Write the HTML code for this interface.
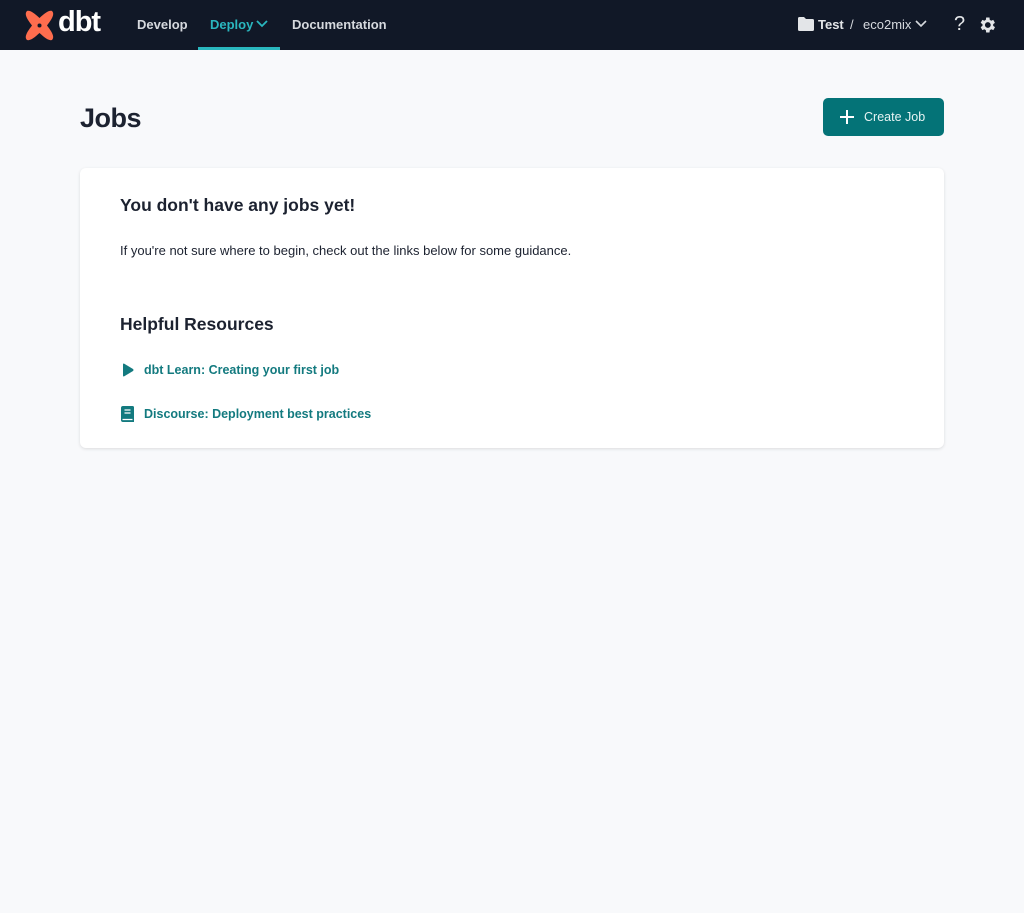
<!DOCTYPE html>
<html><head><meta charset="utf-8"><style>
*{margin:0;padding:0;box-sizing:border-box}
body{width:1024px;height:913px;background:#f8f9fb;font-family:"Liberation Sans",sans-serif;position:relative;overflow:hidden}
.nav{position:absolute;top:0;left:0;width:1024px;height:50px;background:#111827;color:#d6d9de}
.nav .t{position:absolute;top:17px;font-size:13px;font-weight:bold}
.card{position:absolute;left:80px;top:168px;width:864px;height:280px;background:#fff;border-radius:6px;box-shadow:0 1px 3px rgba(0,0,0,.12)}
.link{position:absolute;left:64px;font-size:12.5px;font-weight:bold;color:#137a7f}
</style></head><body>
<div class="nav">
<svg style="position:absolute;left:24px;top:10px" width="31" height="31" viewBox="0 0 31 31"><path d="M3 1 C6 0 10 3 15.5 8 C21 3 25 0 28 1 C31 4 28 9 23 15.5 C28 22 31 27 28 30 C25 31 21 28 15.5 23 C10 28 6 31 3 30 C0 27 3 22 8 15.5 C3 9 0 4 3 1Z" fill="#fe6d4e"/><circle cx="15.5" cy="15.5" r="2" fill="#111827"/></svg>
<div style="position:absolute;left:58px;top:6px;font-size:29px;font-weight:bold;color:#fff;letter-spacing:-1px">dbt</div>
<div class="t" style="left:137px">Develop</div>
<div class="t" style="left:210px;color:#2ab7bf">Deploy</div>
<svg style="position:absolute;left:256px;top:20px" width="12" height="8" viewBox="0 0 12 8"><path d="M1 1l5 5 5-5" stroke="#2ab7bf" stroke-width="1.8" fill="none"/></svg>
<div style="position:absolute;left:198px;top:47px;width:82px;height:3px;background:#2ab7bf"></div>
<div class="t" style="left:292px">Documentation</div>
<svg style="position:absolute;left:798px;top:17px" width="16" height="14" viewBox="0 0 16 14"><path d="M0 1.5Q0 0 1.5 0H6l2 2h6.5Q16 2 16 3.5V12.5Q16 14 14.5 14H1.5Q0 14 0 12.5Z" fill="#e3e5e8"/></svg>
<div class="t" style="left:818px;color:#e3e5e8">Test</div>
<div class="t" style="left:850px;font-weight:normal">/</div>
<div class="t" style="left:863px;font-weight:normal">eco2mix</div>
<svg style="position:absolute;left:915px;top:20px" width="12" height="8" viewBox="0 0 12 8"><path d="M1 1l5 5 5-5" stroke="#d6d9de" stroke-width="1.6" fill="none"/></svg>
<div style="position:absolute;left:954px;top:13px;font-size:20px;color:#e3e5e8">?</div>
<svg style="position:absolute;left:977px;top:15px" width="20" height="20" viewBox="0 0 24 24"><path fill="#e3e5e8" d="M19.4 13a7.5 7.5 0 000-2l2.1-1.6-2-3.5-2.5 1a7.6 7.6 0 00-1.7-1L15 3h-4l-.4 2.9a7.6 7.6 0 00-1.7 1l-2.5-1-2 3.5L6.6 11a7.5 7.5 0 000 2l-2.2 1.6 2 3.5 2.5-1a7.6 7.6 0 001.7 1L11 21h4l.4-2.9a7.6 7.6 0 001.7-1l2.5 1 2-3.5zM13 15.5A3.5 3.5 0 1113 8.5a3.5 3.5 0 010 7z"/></svg>
</div>
<div style="position:absolute;left:80px;top:103px;font-size:27px;font-weight:bold;color:#1c2230;letter-spacing:-.5px">Jobs</div>
<div style="position:absolute;left:823px;top:98px;width:121px;height:38px;background:#047377;border-radius:5px;color:#e6f3f3;font-size:12.5px">
<svg style="position:absolute;left:17px;top:12px" width="14" height="14" viewBox="0 0 14 14"><path d="M7 0v14M0 7h14" stroke="#fff" stroke-width="2"/></svg>
<span style="position:absolute;left:41px;top:12px">Create Job</span></div>
<div class="card">
<div style="position:absolute;left:40px;top:27px;font-size:17.5px;font-weight:bold;color:#1c2230">You don't have any jobs yet!</div>
<div style="position:absolute;left:40px;top:75px;font-size:13px;color:#1c2230">If you're not sure where to begin, check out the links below for some guidance.</div>
<div style="position:absolute;left:40px;top:146px;font-size:17.5px;font-weight:bold;color:#1c2230">Helpful Resources</div>
<svg style="position:absolute;left:42px;top:195px" width="12" height="14" viewBox="0 0 12 14"><path d="M1 1.5Q1 0 2.3.7L11 6q1 1 0 2L2.3 13.3Q1 14 1 12.5Z" fill="#137a7f"/></svg>
<div class="link" style="top:195px">dbt Learn: Creating your first job</div>
<svg style="position:absolute;left:41px;top:238px" width="13" height="16" viewBox="0 0 13 16"><path d="M2 0h9.5Q13 0 13 1.5V16H2Q0 16 0 14V2Q0 0 2 0Z" fill="#137a7f"/><path d="M3.5 4h6M3.5 7h6M1.5 13.5h10" stroke="#fff" stroke-width="1.2"/></svg>
<div class="link" style="top:239px">Discourse: Deployment best practices</div>
</div>
</body></html>
